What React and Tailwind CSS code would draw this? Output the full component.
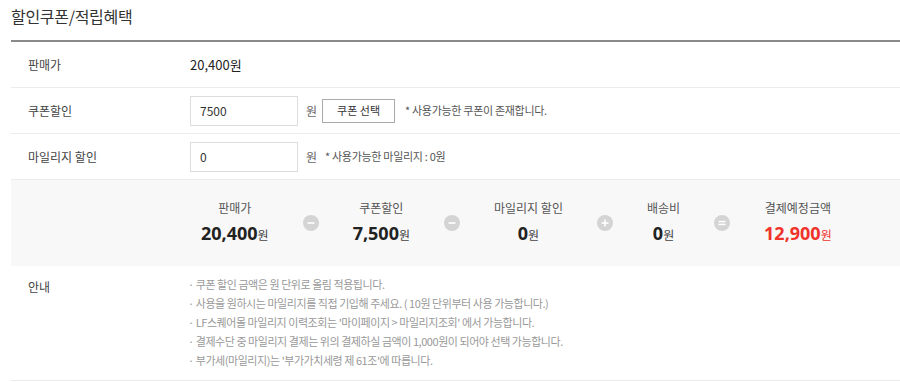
import React from "react";

const font = { fontFamily: '"Noto Sans CJK KR", "Noto Sans", sans-serif' };

function Op({ type }) {
  return (
    <div className="w-4 h-4 rounded-full bg-[#d4d4d4] flex items-center justify-center shrink-0">
      <svg width="16" height="16" viewBox="0 0 16 16">
        {type === "minus" && <rect x="4.5" y="7.2" width="7" height="1.6" fill="#fff" />}
        {type === "plus" && (
          <>
            <rect x="4.5" y="7.2" width="7" height="1.6" fill="#fff" />
            <rect x="7.2" y="4.5" width="1.6" height="7" fill="#fff" />
          </>
        )}
        {type === "eq" && (
          <>
            <rect x="4.5" y="5.8" width="7" height="1.5" fill="#fff" />
            <rect x="4.5" y="8.7" width="7" height="1.5" fill="#fff" />
          </>
        )}
      </svg>
    </div>
  );
}

function Item({ label, value, red }) {
  return (
    <div className="flex flex-col items-center">
      <div className="text-[12px] leading-[16px] text-[#555]">{label}</div>
      <div className="mt-[6px] flex items-baseline leading-[22px]">
        <span className={`text-[18px] font-bold ${red ? "text-[#f0332a]" : "text-[#222]"}`} style={{ fontFamily: '"Open Sans", "Noto Sans", sans-serif' }}>{value}</span>
        <span className={`text-[12px] ${red ? "text-[#f0332a]" : "text-[#444]"}`}>원</span>
      </div>
    </div>
  );
}

export default function App() {
  return (
    <div className="bg-white w-[900px] h-[382px] overflow-hidden" style={font}>
      <div className="pl-[11px]">
        <div className="h-[40px] flex items-center text-[16px] text-[#333] pb-[8px] tracking-[-0.3px]">할인쿠폰/적립혜택</div>
        <div className="w-[889px] border-t-2 border-[#8a8a8a]">
          <div className="h-[46px] flex items-center border-b border-[#ececec]">
            <div className="w-[179px] pl-[17px] text-[12px] text-[#444]">판매가</div>
            <div className="text-[13px] text-[#222]">20,400원</div>
          </div>
          <div className="h-[46px] flex items-center border-b border-[#ececec]">
            <div className="w-[179px] pl-[17px] text-[12px] text-[#444]">쿠폰할인</div>
            <div className="w-[108px] h-[30px] border border-[#dcdcdc] pl-[9px] flex items-center text-[12px] text-[#333]">7500</div>
            <div className="ml-[8px] text-[12px] text-[#666]">원</div>
            <div className="ml-[5px] w-[73px] h-[24px] border border-[#aaa] flex items-center justify-center text-[11px] text-[#333]">쿠폰 선택</div>
            <div className="ml-[10px] text-[11px] text-[#555] tracking-[-0.3px]">* 사용가능한 쿠폰이 존재합니다.</div>
          </div>
          <div className="h-[46px] flex items-center border-b border-[#ececec]">
            <div className="w-[179px] pl-[17px] text-[12px] text-[#444]">마일리지 할인</div>
            <div className="w-[108px] h-[30px] border border-[#dcdcdc] pl-[9px] flex items-center text-[12px] text-[#333]">0</div>
            <div className="ml-[8px] text-[12px] text-[#666]">원</div>
            <div className="ml-[8px] text-[11px] text-[#555] tracking-[-0.3px]">* 사용가능한 마일리지 : 0원</div>
          </div>
          <div className="h-[86px] bg-[#f8f8f8] flex items-center gap-[34px] pl-[190px] pb-[1px]">
            <Item label="판매가" value="20,400" />
            <Op type="minus" />
            <Item label="쿠폰할인" value="7,500" />
            <Op type="minus" />
            <Item label="마일리지 할인" value="0" />
            <Op type="plus" />
            <Item label="배송비" value="0" />
            <Op type="eq" />
            <Item label="결제예정금액" value="12,900" red />
          </div>
          <div className="h-[115px] flex border-b border-[#ececec] pt-[9px]">
            <div className="w-[177px] pl-[17px] text-[12px] text-[#444] pt-[3px]">안내</div>
            <div className="text-[11px] leading-[19px] text-[#999] tracking-[-0.45px]">
              <div>· 쿠폰 할인 금액은 원 단위로 올림 적용됩니다.</div>
              <div>· 사용을 원하시는 마일리지를 직접 기입해 주세요. ( 10원 단위부터 사용 가능합니다.)</div>
              <div>· LF스퀘어몰 마일리지 이력조회는 '마이페이지 &gt; 마일리지조회' 에서 가능합니다.</div>
              <div>· 결제수단 중 마일리지 결제는 위의 결제하실 금액이 1,000원이 되어야 선택 가능합니다.</div>
              <div>· 부가세(마일리지)는 '부가가치세령 제 61조'에 따릅니다.</div>
            </div>
          </div>
        </div>
      </div>
    </div>
  );
}
